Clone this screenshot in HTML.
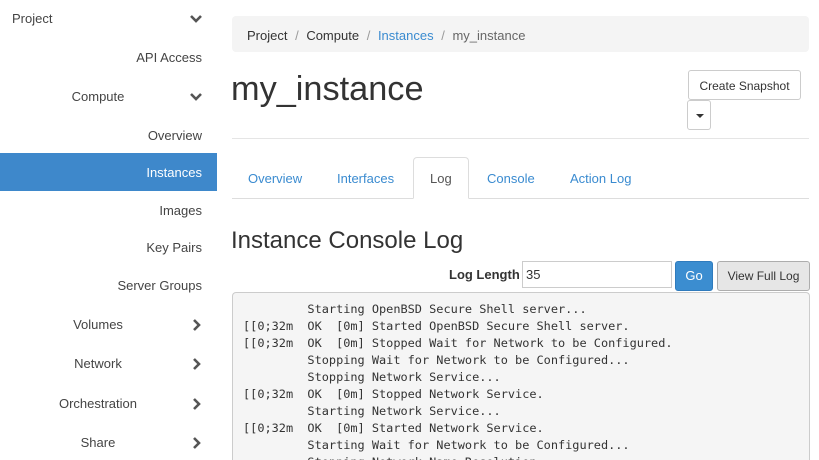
<!DOCTYPE html>
<html><head><meta charset="utf-8"><style>
*{box-sizing:border-box;margin:0;padding:0}
html,body{width:819px;height:460px;overflow:hidden}
body{background:#fff;font-family:"Liberation Sans",sans-serif;color:#333;position:relative;font-size:13px}
.a{position:absolute;white-space:nowrap}
.sb{position:absolute;left:0;width:217px;height:38px;line-height:40px;color:#444;font-size:13px}
.r{text-align:right;padding-right:15px}
.c{text-align:center;width:196px}
.chev{position:absolute;left:189px;top:0;width:14px;height:38px}
.link{color:#3a8bd0}
.tab{position:absolute;top:171px;font-size:13px;color:#3a8bd0}
pre{font-family:"DejaVu Sans Mono","Liberation Mono",monospace;font-size:11.9px;line-height:17px;color:#333}
</style></head><body>
<div class="sb" style="top:-1px;padding-left:12px">Project<svg class="chev" viewBox="0 0 14 38"><path d="M2 17l5 5 5-5" stroke="#555" stroke-width="2.6" fill="none"/></svg></div>
<div class="sb r" style="top:38px">API Access</div>
<div class="sb" style="top:77px"><div class="c" style="text-align:center">Compute</div><svg class="chev" viewBox="0 0 14 38"><path d="M2 17l5 5 5-5" stroke="#555" stroke-width="2.6" fill="none"/></svg></div>
<div class="sb r" style="top:116px">Overview</div>
<div class="sb r" style="top:153px;background:#3e88cb;color:#fff">Instances</div>
<div class="sb r" style="top:191px">Images</div>
<div class="sb r" style="top:228px">Key Pairs</div>
<div class="sb r" style="top:266px">Server Groups</div>
<div class="sb" style="top:305px"><div class="c">Volumes</div><svg class="chev" viewBox="0 0 14 38"><path d="M5 15l5 5-5 5" stroke="#555" stroke-width="2.6" fill="none"/></svg></div>
<div class="sb" style="top:344px"><div class="c">Network</div><svg class="chev" viewBox="0 0 14 38"><path d="M5 15l5 5-5 5" stroke="#555" stroke-width="2.6" fill="none"/></svg></div>
<div class="sb" style="top:384px"><div class="c">Orchestration</div><svg class="chev" viewBox="0 0 14 38"><path d="M5 15l5 5-5 5" stroke="#555" stroke-width="2.6" fill="none"/></svg></div>
<div class="sb" style="top:423px"><div class="c">Share</div><svg class="chev" viewBox="0 0 14 38"><path d="M5 15l5 5-5 5" stroke="#555" stroke-width="2.6" fill="none"/></svg></div>

<div class="a" style="left:232px;top:16px;width:577px;height:36px;background:#f4f4f4;border-radius:4px"></div>
<div class="a" style="left:247px;top:28px;font-size:13px">Project <span style="color:#999;margin:0 4px">/</span> Compute <span style="color:#999;margin:0 4px">/</span> <span class="link">Instances</span> <span style="color:#999;margin:0 4px">/</span> <span style="color:#666">my_instance</span></div>
<div class="a" style="left:231px;top:70px;font-size:34.3px;color:#333">my_instance</div>
<div class="a" style="left:688px;top:70px;width:113px;height:30px;border:1px solid #ccc;border-radius:3px;font-size:12px;line-height:30px;text-align:center">Create Snapshot</div>
<div class="a" style="left:687px;top:100px;width:24px;height:30px;border:1px solid #ccc;border-radius:3px"><div style="position:absolute;left:8px;top:13px;border-left:4px solid transparent;border-right:4px solid transparent;border-top:4px solid #333"></div></div>
<div class="a" style="left:232px;top:138px;width:577px;height:1px;background:#e5e5e5"></div>

<div class="a" style="left:232px;top:198px;width:577px;height:1px;background:#ddd"></div>
<div class="a" style="left:413px;top:157px;width:56px;height:42px;border:1px solid #ddd;border-bottom:1px solid #fff;border-radius:4px 4px 0 0;background:#fff"></div>
<div class="tab" style="left:248px">Overview</div>
<div class="tab" style="left:337px">Interfaces</div>
<div class="tab" style="left:430px;color:#555">Log</div>
<div class="tab" style="left:487px">Console</div>
<div class="tab" style="left:570px">Action Log</div>

<div class="a" style="left:231px;top:227px;font-size:24px;color:#333">Instance Console Log</div>
<div class="a" style="left:449px;top:267px;font-weight:bold;font-size:13px">Log Length</div>
<div class="a" style="left:522px;top:261px;width:150px;height:27px;border:1px solid #ccc;font-size:13px;line-height:25px;padding-left:3px">35</div>
<div class="a" style="left:675px;top:261px;width:38px;height:30px;background:#3b8dd0;border:1px solid #2f7bbd;border-radius:3px;color:#fff;text-align:center;line-height:28px;font-size:13px">Go</div>
<div class="a" style="left:717px;top:261px;width:93px;height:30px;background:#e6e6e6;border:1px solid #adadad;border-radius:3px;text-align:center;line-height:28px;font-size:12px">View Full Log</div>
<div class="a" style="left:232px;top:292px;width:578px;height:168px;background:#f5f5f5;border:1px solid #ccc;border-bottom:none;border-radius:4px 4px 0 0;padding:8px 10px;overflow:hidden"><pre>         Starting OpenBSD Secure Shell server...
[[0;32m  OK  [0m] Started OpenBSD Secure Shell server.
[[0;32m  OK  [0m] Stopped Wait for Network to be Configured.
         Stopping Wait for Network to be Configured...
         Stopping Network Service...
[[0;32m  OK  [0m] Stopped Network Service.
         Starting Network Service...
[[0;32m  OK  [0m] Started Network Service.
         Starting Wait for Network to be Configured...
         Stopping Network Name Resolution...</pre></div>
</body></html>
